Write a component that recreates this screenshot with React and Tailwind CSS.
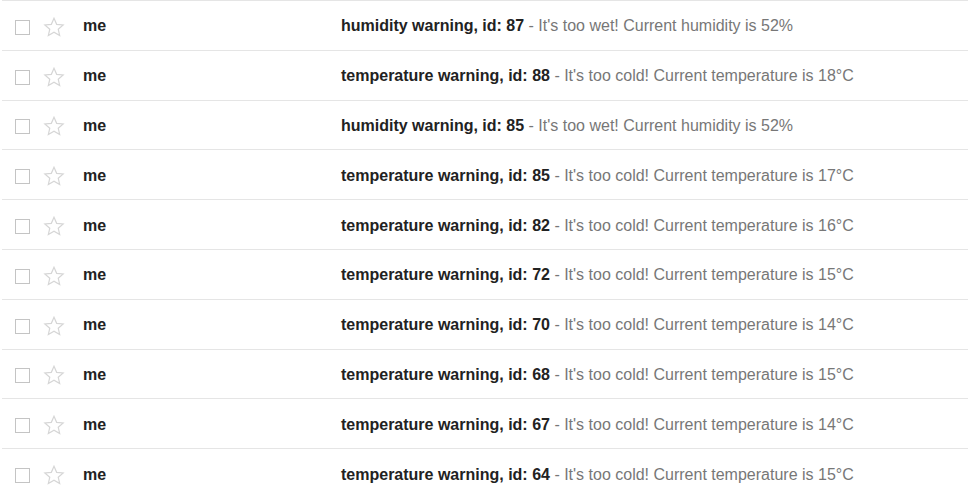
import React from "react";

const rows = [
  ["humidity warning, id: 87", "It's too wet! Current humidity is 52%"],
  ["temperature warning, id: 88", "It's too cold! Current temperature is 18°C"],
  ["humidity warning, id: 85", "It's too wet! Current humidity is 52%"],
  ["temperature warning, id: 85", "It's too cold! Current temperature is 17°C"],
  ["temperature warning, id: 82", "It's too cold! Current temperature is 16°C"],
  ["temperature warning, id: 72", "It's too cold! Current temperature is 15°C"],
  ["temperature warning, id: 70", "It's too cold! Current temperature is 14°C"],
  ["temperature warning, id: 68", "It's too cold! Current temperature is 15°C"],
  ["temperature warning, id: 67", "It's too cold! Current temperature is 14°C"],
  ["temperature warning, id: 64", "It's too cold! Current temperature is 15°C"],
];

function Star() {
  return (
    <svg width="22" height="22" viewBox="0 0 24 24" className="shrink-0">
      <path
        d="M12 2.5l2.9 6.6 7.1.6-5.4 4.7 1.6 7-6.2-3.7-6.2 3.7 1.6-7L2 9.7l7.1-.6z"
        fill="none"
        stroke="#d6d6d6"
        strokeWidth="1.3"
        strokeLinejoin="miter"
      />
    </svg>
  );
}

export default function App() {
  return (
    <div
      className="w-[969px] h-[496px] bg-white overflow-hidden"
      style={{ fontFamily: '"Liberation Sans", Arial, sans-serif' }}
    >
      <div className="ml-[2px] mr-[1px] border-t border-[#e5e5e5]">
        {rows.map(([subj, body], i) => (
          <div
            key={i}
            className="h-[49.8px] pt-[2px] border-b border-[#e5e5e5] flex items-center text-[16px]"
          >
            <div className="ml-[13px] mt-[2px] w-[15px] h-[15px] border border-[#c4c4c4] shrink-0" />
            <div className="ml-[13px] mt-[1px]">
              <Star />
            </div>
            <div className="ml-[18px] w-[258px] font-bold text-[#222]">me</div>
            <div className="whitespace-nowrap">
              <span className="font-bold text-[#222]">{subj}</span>
              <span className="text-[#777]"> - {body}</span>
            </div>
          </div>
        ))}
      </div>
    </div>
  );
}
